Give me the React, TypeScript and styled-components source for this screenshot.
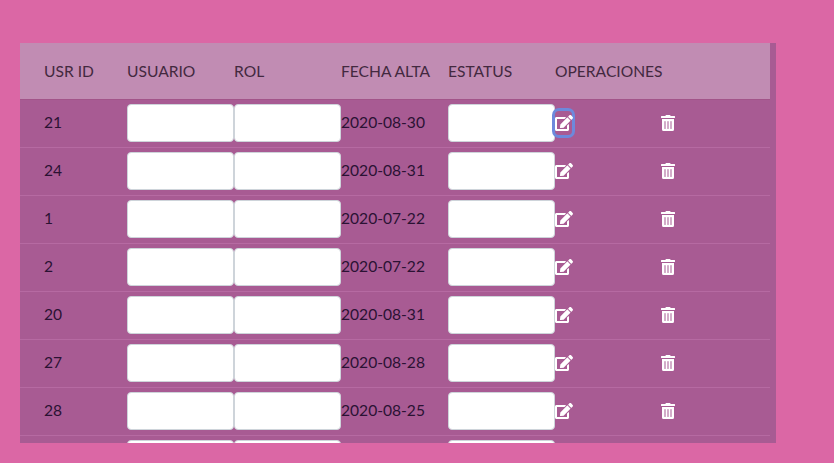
import React from 'react';
import styled, { createGlobalStyle } from 'styled-components';
import { FaEdit, FaTrashAlt } from 'react-icons/fa';

type User = { id: number; alta: string };

const users: User[] = [
  { id: 21, alta: '2020-08-30' },
  { id: 24, alta: '2020-08-31' },
  { id: 1, alta: '2020-07-22' },
  { id: 2, alta: '2020-07-22' },
  { id: 20, alta: '2020-08-31' },
  { id: 27, alta: '2020-08-28' },
  { id: 28, alta: '2020-08-25' },
  { id: 29, alta: '2020-08-25' },
  { id: 30, alta: '2020-08-25' },
];

const Global = createGlobalStyle`
  html, body {
    margin: 0;
    height: 100%;
    overflow: hidden;
    background: #db67a5;
  }
  body {
    font-family: Lato, "Open Sans", sans-serif;
    font-size: 15.6px;
  }
`;

const Page = styled.main`
  padding: 43px 0 0 20px;
`;

const Panel = styled.section`
  width: 756px;
  height: 400px;
  overflow-y: scroll;
  background: #a85b93;

  &::-webkit-scrollbar {
    width: 6px;
  }
  &::-webkit-scrollbar-track {
    background: #c65d9c;
  }
  &::-webkit-scrollbar-thumb {
    background: #ad5590;
  }
`;

const Row = styled.div`
  display: grid;
  grid-template-columns: repeat(7, 107px);
  width: 750px;
  box-sizing: border-box;
  height: 48px;
  padding-bottom: 1px;
  align-items: center;
  border-bottom: 1px solid #b66aa2;
  color: #2b1233;
`;

const HeadRow = styled(Row)`
  height: 57px;
  padding-bottom: 0;
  background: #c18cb3;
  border-bottom: 1px solid #a25489;
  color: #43293f;
`;

const Cell = styled.div<{ $inset?: boolean }>`
  padding-left: ${(p) => (p.$inset ? '24px' : '0')};
  white-space: nowrap;
`;

const TextCell = styled(Cell)`
  padding-bottom: 2px;
`;

const Field = styled.input`
  display: block;
  width: 107px;
  height: 38px;
  box-sizing: border-box;
  border: 1px solid #ced4da;
  border-radius: 4px;
  background: #fff;
  padding: 0;
`;

const IconButton = styled.button<{ $focused?: boolean }>`
  display: flex;
  align-items: center;
  height: 24px;
  padding: 0;
  border: 0;
  border-radius: 4px;
  background: transparent;
  color: #fff;
  box-shadow: ${(p) => (p.$focused ? '0 0 0 3px #6d89dc' : 'none')};
`;

const TrashButton = styled(IconButton)`
  margin-left: -1px;
`;

const EditIcon = styled(FaEdit)`
  width: 18px;
  height: 16px;
  margin-right: -1px;
`;

const TrashIcon = styled(FaTrashAlt)`
  width: 14px;
  height: 16px;
`;

const headers = ['USUARIO', 'ROL', 'FECHA ALTA', 'ESTATUS', 'OPERACIONES'];

export default function App() {
  return (
    <>
      <Global />
      <Page>
        <Panel>
          <HeadRow>
            <Cell $inset>USR ID</Cell>
            {headers.map((h) => (
              <Cell key={h}>{h}</Cell>
            ))}
          </HeadRow>
          {users.map((u, i) => (
            <Row key={u.id}>
              <TextCell $inset>{u.id}</TextCell>
              <Cell>
                <Field />
              </Cell>
              <Cell>
                <Field />
              </Cell>
              <TextCell>{u.alta}</TextCell>
              <Cell>
                <Field />
              </Cell>
              <Cell>
                <IconButton $focused={i === 0}>
                  <EditIcon />
                </IconButton>
              </Cell>
              <Cell>
                <TrashButton>
                  <TrashIcon />
                </TrashButton>
              </Cell>
            </Row>
          ))}
        </Panel>
      </Page>
    </>
  );
}
